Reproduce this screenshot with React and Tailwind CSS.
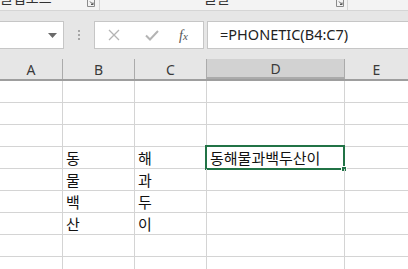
import React from "react";

const KR = { fontFamily: '"Noto Sans CJK KR", "Noto Sans", sans-serif' };
const UI = { fontFamily: '"Noto Sans", "Noto Sans CJK KR", sans-serif' };

function Launcher() {
  return (
    <svg width="8" height="7" viewBox="0 0 8 7" className="block">
      <path d="M0.5 0 V6.5 H7.5 V0" fill="none" stroke="#8a8a8a" strokeWidth="1" />
      <path d="M3 1.5 L6 4.5 M6 2.5 V4.5 H4" fill="none" stroke="#555" strokeWidth="1" />
    </svg>
  );
}

const cols = [
  { w: "w-[63px]", key: "A" },
  { w: "w-[72px]", key: "B" },
  { w: "w-[72px]", key: "C" },
  { w: "w-[138px]", key: "D" },
  { w: "flex-1", key: "E" },
];

const data = {
  4: { B: "동", C: "해", D: "동해물과백두산이" },
  5: { B: "물", C: "과" },
  6: { B: "백", C: "두" },
  7: { B: "산", C: "이" },
};

export default function App() {
  const rows = [1, 2, 3, 4, 5, 6, 7, 8, 9];
  return (
    <div className="w-[408px] h-[269px] overflow-hidden bg-white relative" style={UI}>
      {/* ribbon remnant */}
      <div className="h-[11px] bg-[#f3f3f3] border-b border-[#d5d5d5] flex overflow-hidden">
        <div className="w-[100px] flex border-r border-[#d5d5d5] h-[10px] relative">
          <div className="text-[14px] leading-[14px] -mt-[10px] text-[#333] whitespace-nowrap" style={KR}>
            클립보드
          </div>
          <div className="ml-auto mr-[4px] mt-[0px]">
            <Launcher />
          </div>
        </div>
        <div className="w-[248px] flex border-r border-[#d5d5d5] h-[10px]">
          <div className="ml-[104px] text-[14px] leading-[14px] -mt-[10px] text-[#333] whitespace-nowrap" style={KR}>
            글꼴
          </div>
          <div className="ml-auto mr-[3px]">
            <Launcher />
          </div>
        </div>
      </div>

      {/* formula bar */}
      <div className="h-[48px] bg-[#e6e6e6] pt-[10px] flex items-start">
        <div className="w-[64px] h-[28px] bg-white border border-[#c6c6c6] border-l-0 flex items-center justify-end pr-[6px]">
          <svg width="9" height="5" viewBox="0 0 9 5">
            <path d="M0 0 H9 L4.5 5 Z" fill="#6a6a6a" />
          </svg>
        </div>
        <div className="w-[30px] h-[28px] flex flex-col items-center justify-center gap-[2px]">
          <div className="w-[2px] h-[2px] bg-[#a6a6a6]" />
          <div className="w-[2px] h-[2px] bg-[#a6a6a6]" />
          <div className="w-[2px] h-[2px] bg-[#a6a6a6]" />
        </div>
        <div className="w-[110px] h-[28px] bg-white border border-[#c6c6c6] flex items-center">
          <svg width="12" height="12" viewBox="0 0 12 12" className="ml-[13px]">
            <path d="M1 1 L11 11 M11 1 L1 11" stroke="#b4b4b4" strokeWidth="1.3" fill="none" />
          </svg>
          <svg width="14" height="11" viewBox="0 0 14 11" className="ml-[25px]">
            <path d="M1 5.5 L5 9.5 L13 1" stroke="#b4b4b4" strokeWidth="2" fill="none" />
          </svg>
          <span
            className="ml-[20px] text-[14px] italic text-[#555]"
            style={{ fontFamily: '"Liberation Serif", serif' }}
          >
            f<span className="text-[11px]">x</span>
          </span>
        </div>
        <div className="flex-1 ml-[3px] h-[28px] bg-white border border-[#c6c6c6] border-r-0 flex items-center pl-[12px]">
          <span className="text-[14.5px] text-[#222]" style={UI}>
            =PHONETIC(B4:C7)
          </span>
        </div>
      </div>

      {/* column headers */}
      <div className="h-[22px] flex bg-[#e6e6e6] border-b-2 border-[#9e9e9e]">
        {cols.map((c) => (
          <div
            key={c.key}
            className={`${c.w} h-full flex items-center justify-center text-[14px] text-[#3a3a3a] ${
              c.key === "D" ? "bg-[#d2d2d2] border-b-2 border-[#217346] -mb-[2px] h-[22px]" : ""
            } ${c.key !== "E" ? "border-r border-[#ababab]" : ""}`}
          >
            {c.key}
          </div>
        ))}
      </div>

      {/* grid */}
      {rows.map((r) => (
        <div key={r} className="h-[22px] flex border-b border-[#d4d4d4]">
          {cols.map((c) => {
            const v = data[r] && data[r][c.key];
            const sel = r === 4 && c.key === "D";
            return (
              <div
                key={c.key}
                className={`${c.w} h-full relative flex items-center pl-[3px] text-[15px] text-[#111] ${
                  c.key !== "E" ? "border-r border-[#d4d4d4]" : ""
                }`}
                style={KR}
              >
                {v && <span className="leading-none whitespace-nowrap">{v}</span>}
                {sel && (
                  <div className="absolute -left-[2px] -top-[2px] w-[140px] h-[25px] border-2 border-[#217346]">
                    <div className="absolute -right-[4px] -bottom-[4px] w-[6px] h-[6px] bg-[#217346] border border-white" />
                  </div>
                )}
              </div>
            );
          })}
        </div>
      ))}
    </div>
  );
}
